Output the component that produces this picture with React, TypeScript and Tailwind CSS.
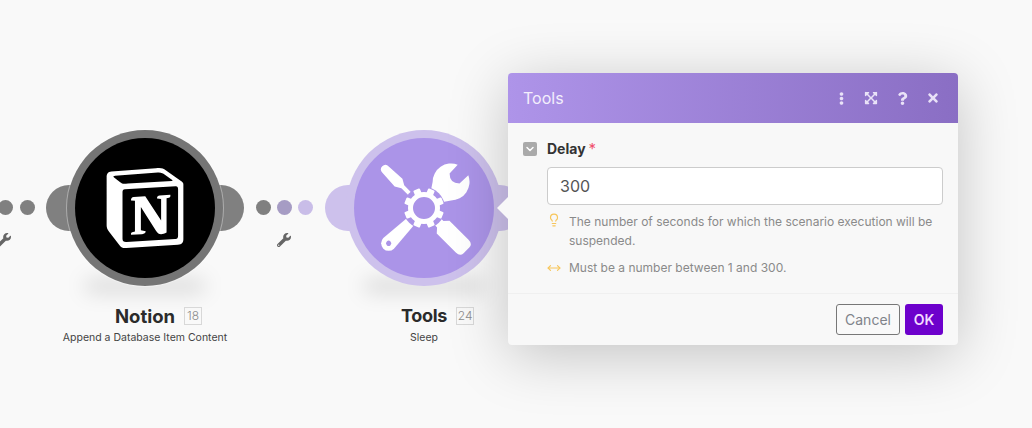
import { FaEllipsisV, FaExpandArrowsAlt, FaQuestion, FaTimes, FaWrench } from "react-icons/fa";
import { LuChevronDown, LuLightbulb, LuMoveHorizontal } from "react-icons/lu";
import { SiNotion } from "react-icons/si";

const font = { fontFamily: "Inter, 'Liberation Sans', sans-serif" };

function ToolsIcon() {
  const teeth = [0, 45, 90, 135, 180, 225, 270, 315];
  return (
    <svg viewBox="-50 -50 100 100" width="100" height="100" fill="#fff">
      {/* screwdriver, up-left */}
      <g transform="rotate(-45)">
        <path d="M-2 -20 L-2 -30 L-5.5 -36 L-4.5 -54 Q-4.5 -59 0 -59 Q4.5 -59 4.5 -54 L5.5 -36 L2 -30 L2 -20 Z" />
      </g>
      {/* wrench handle, down-left */}
      <g transform="rotate(-135)">
        <path d="M-5 -19 L-7.5 -50 A7.5 7.5 0 0 1 7.5 -50 L5 -19 Z" />
        <circle cx="0" cy="-50" r="2.6" fill="#ab94e8" />
      </g>
      {/* screwdriver handle, down-right */}
      <g transform="rotate(135)">
        <path d="M-4.5 -19 L-4.5 -23 L-9 -27 L-9 -54 Q-9 -60 -4 -60 L4 -60 Q9 -60 9 -54 L9 -27 L4.5 -23 L4.5 -19 Z" />
      </g>
      {/* wrench head, up-right */}
      <g transform="translate(27 -26) rotate(45)">
        <path d="M-7.5 -17 A18.5 18.5 0 0 0 -13 13 L-7 22 L7 22 L13 13 A18.5 18.5 0 0 0 7.5 -17 L7 -5 Q0 2 -7 -5 Z" />
      </g>
      {/* gear */}
      <circle r="21" fill="#ab94e8" />
      {teeth.map(a => (
        <rect key={a} x="-3.5" y="-20" width="7" height="8" rx="1" transform={`rotate(${a + 22.5})`} />
      ))}
      <circle r="13.5" fill="none" stroke="#fff" strokeWidth="5" />
    </svg>
  );
}

function Node({ x, ring, lobe, inner, name, nameClass, badge, sub, edgeClass, children }: {
  x: number; ring: string; lobe: string; inner: string; name: string; nameClass: string; badge: number; sub: string; edgeClass: string; children: React.ReactNode;
}) {
  return (
    <div className="absolute top-[130px] h-[220px] w-[240px]" style={{ left: x - 120 }}>
      <div className="absolute left-[60px] top-[150px] h-[12px] w-[120px] rounded-full bg-black/15 blur-[10px]" />
      <div className="absolute left-[21px] top-[55px] h-[46px] w-[60px] rounded-full" style={{ background: lobe }} />
      <div className="absolute left-[159px] top-[55px] h-[46px] w-[60px] rounded-full" style={{ background: lobe }} />
      <div className={`absolute left-[42px] top-0 flex h-[156px] w-[156px] items-center justify-center rounded-full ${edgeClass}`} style={{ background: ring }}>
        <div className="flex h-[140px] w-[140px] items-center justify-center rounded-full" style={{ background: inner }}>
          {children}
        </div>
      </div>
      <div className="absolute inset-x-0 top-[176px] flex flex-col items-center">
        <div className="relative flex h-[20px] items-center justify-center">
          <span className={`font-bold leading-[20px] text-[#2b2b2b] ${nameClass}`}>{name}</span>
          <span className="absolute left-full top-[1px] ml-[9px] flex h-[18px] w-[18px] items-center justify-center border border-[#d8d8d8] text-[12px] font-light text-[#8c8c8c]">{badge}</span>
        </div>
        <span className="mt-[3px] text-[10.5px] leading-[18px] text-[#444]">{sub}</span>
      </div>
    </div>
  );
}

function Dot({ x, color }: { x: number; color: string }) {
  return <div className="absolute top-[200px] h-[15px] w-[15px] rounded-full" style={{ left: x - 7.5, background: color }} />;
}

export default function App() {
  return (
    <div className="relative h-[428px] w-[1032px] overflow-hidden bg-[#f9f9f9]" style={font}>
      <Dot x={5} color="#808080" />
      <Dot x={27} color="#808080" />
      <Dot x={263} color="#808080" />
      <Dot x={284} color="#a69cc4" />
      <Dot x={305} color="#c9bde8" />
      <FaWrench className="absolute left-[-3px] top-[233px] text-[#666]" size={14} />
      <FaWrench className="absolute left-[277px] top-[233px] text-[#666]" size={14} />

      <Node x={145} ring="#757575" lobe="#808080" inner="#000" name="Notion" nameClass="text-[18.5px]" badge={18} sub="Append a Database Item Content" edgeClass="shadow-[0_0_0_1px_rgba(255,255,255,0.35)]">
        <SiNotion size={80} color="#fff" />
      </Node>
      <Node x={424} ring="#cdc1ec" lobe="#cdc1ec" inner="#ab94e8" name="Tools" nameClass="text-[18px] tracking-[-0.3px]" badge={24} sub="Sleep" edgeClass="">
        <ToolsIcon />
      </Node>

      {/* settings dialog, sits over the canvas */}
      <div className="absolute left-[508px] top-[73px] w-[450px] rounded-[4px] bg-[#f8f8f8] shadow-[0_10px_60px_rgba(0,0,0,0.22)]">
        <div className="absolute left-[-11px] top-[124px] h-0 w-0 border-y-[11px] border-r-[11px] border-y-transparent border-r-[#f8f8f8]" />
        <div className="flex h-[50px] items-center rounded-t-[4px] bg-gradient-to-r from-[#ae94e9] to-[#8a6ec4] pl-[15px] pr-[18px]">
          <span className="text-[16px] text-[#f3eefc]">Tools</span>
          <div className="ml-auto flex items-center text-[#e9e2f7]">
            <FaEllipsisV size={13} />
            <FaExpandArrowsAlt size={14} className="ml-[16px]" />
            <FaQuestion size={13} className="ml-[18px]" />
            <FaTimes size={14} className="ml-[17px]" />
          </div>
        </div>

        <div className="px-[15px] pt-[19px]">
          <div className="flex items-center">
            <div className="flex h-[14px] w-[14px] items-center justify-center rounded-[2px] bg-[#aaa]">
              <LuChevronDown size={12} color="#fff" strokeWidth={3} />
            </div>
            <span className="ml-[10px] text-[14px] font-bold leading-[14px] text-[#333]">Delay</span>
            <span className="ml-[3px] text-[15px] leading-[14px] text-[#f0506e]">*</span>
          </div>
          <div className="ml-[24px] mt-[11px] flex h-[38px] items-center rounded-[4px] border border-[#ccc] bg-white px-[12px] text-[16px] text-[#555]">300</div>
          <div className="ml-[24px] mt-[7px] flex text-[12px] leading-[19px] text-[#8a8a8a]">
            <LuLightbulb size={14} color="#f7c65b" className="mt-[1px] shrink-0" />
            <p className="ml-[8px]">The number of seconds for which the scenario execution will be suspended.</p>
          </div>
          <div className="ml-[24px] mt-[8px] flex items-center text-[12px] leading-[19px] text-[#8a8a8a]">
            <LuMoveHorizontal size={14} color="#f7c65b" className="shrink-0" />
            <p className="ml-[8px]">Must be a number between 1 and 300.</p>
          </div>
        </div>

        <div className="mt-[16px] flex justify-end gap-[5px] border-t border-[#f0f0f0] px-[15px] pb-[10px] pt-[10px]">
          <button className="h-[31px] w-[64px] rounded-[3px] border border-[#777] bg-[#f9f9f9] text-[14px] text-[#80838a]">Cancel</button>
          <button className="h-[31px] w-[38px] rounded-[3px] bg-[#6d00cc] text-[14px] font-semibold text-[#f2d9ff]">OK</button>
        </div>
      </div>
    </div>
  );
}
